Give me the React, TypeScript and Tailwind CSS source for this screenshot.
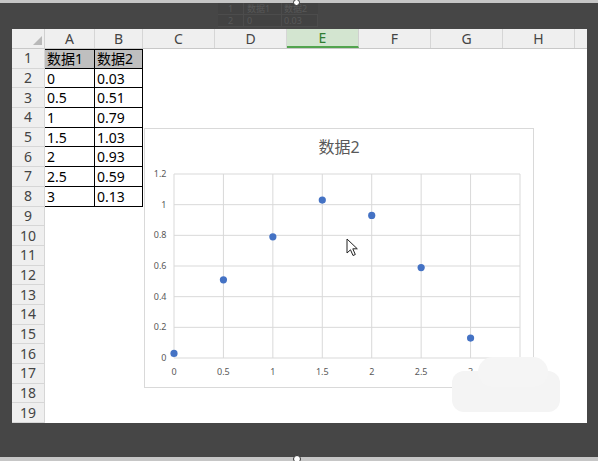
import React from "react";

const cols = [
  { l: "A", w: "w-[50px]" },
  { l: "B", w: "w-[48px]" },
  { l: "C", w: "w-[72px]" },
  { l: "D", w: "w-[72px]" },
  { l: "E", w: "w-[72px]" },
  { l: "F", w: "w-[72px]" },
  { l: "G", w: "w-[72px]" },
  { l: "H", w: "w-[72px]" },
];

const data = [
  ["数据1", "数据2"],
  ["0", "0.03"],
  ["0.5", "0.51"],
  ["1", "0.79"],
  ["1.5", "1.03"],
  ["2", "0.93"],
  ["2.5", "0.59"],
  ["3", "0.13"],
];

const pts: [number, number][] = [
  [0, 0.03],
  [0.5, 0.51],
  [1, 0.79],
  [1.5, 1.03],
  [2, 0.93],
  [2.5, 0.59],
  [3, 0.13],
];

const font = { fontFamily: '"Noto Sans", "Noto Sans CJK SC", sans-serif' };

function Chart() {
  const x0 = 30;
  const y0 = 230;
  const sx = 346 / 3.5;
  const sy = 184 / 1.2;
  const yt = [0, 0.2, 0.4, 0.6, 0.8, 1, 1.2];
  const xt = [0, 0.5, 1, 1.5, 2, 2.5, 3, 3.5];
  const lab = (v: number) => (Math.round(v * 10) / 10).toString();
  return (
    <svg width="390" height="260" className="block" style={font}>
      <rect x="0.5" y="0.5" width="389" height="259" fill="#ffffff" stroke="#d9d9d9" />
      <text x="195" y="25" textAnchor="middle" fontSize="16" fill="#595959" style={font}>
        数据2
      </text>
      {yt.map((v) => (
        <line key={"h" + v} x1={x0} x2={x0 + 346} y1={y0 - v * sy} y2={y0 - v * sy} stroke="#d9d9d9" strokeWidth="1" />
      ))}
      {xt.map((v) => (
        <line key={"v" + v} x1={x0 + v * sx} x2={x0 + v * sx} y1={y0 - 184} y2={y0} stroke="#d9d9d9" strokeWidth="1" />
      ))}
      {yt.map((v) => (
        <text key={"yl" + v} x="22.5" y={y0 - v * sy + 3} textAnchor="end" fontSize="9" fill="#595959">
          {lab(v)}
        </text>
      ))}
      {xt.slice(0, 7).map((v) => (
        <text key={"xl" + v} x={x0 + v * sx} y="247" textAnchor="middle" fontSize="9" fill="#595959">
          {lab(v)}
        </text>
      ))}
      {pts.map(([x, y]) => (
        <circle key={"p" + x} cx={x0 + x * sx} cy={y0 - y * sy} r="3.6" fill="#4472c4" />
      ))}
    </svg>
  );
}

export default function App() {
  return (
    <div className="w-[598px] h-[461px] bg-[#464646] relative overflow-hidden flex flex-col" style={font}>
      <div className="h-[3px] bg-[#c6c6c6]" />
      <div className="h-[26px] relative">
        <div className="absolute left-[218px] top-0 w-[100px] h-[24px] bg-[#424242] flex flex-col text-[9px] leading-none text-[#585858]">
          <div className="h-[12px] flex border-b border-[#4c4c4c] items-center">
            <div className="w-[25px] text-center">1</div>
            <div className="w-[38px] pl-[3px] border-l border-[#4c4c4c] h-full flex items-center">数据1</div>
            <div className="flex-1 pl-[2px] border-l border-[#4c4c4c] h-full flex items-center">数据2</div>
          </div>
          <div className="h-[12px] flex items-center border-b border-[#4c4c4c]">
            <div className="w-[25px] text-center">2</div>
            <div className="w-[38px] pl-[3px] border-l border-[#4c4c4c] h-full flex items-center">0</div>
            <div className="flex-1 pl-[2px] border-l border-r border-[#4c4c4c] h-full flex items-center">0.03</div>
          </div>
        </div>
        <div className="absolute left-[293px] top-[-4px] w-[7px] h-[7px] rounded-full bg-white border border-[#333]" />
      </div>
      <div className="ml-[12px] w-[575px] h-[394px] bg-white relative flex flex-col">
        <div className="h-[20px] flex bg-[#efefef] border-b border-[#c8c8c8] text-[14px] text-[#444]">
          <div className="w-[33px] relative border-r border-[#d0d0d0]">
            <svg width="33" height="19" className="absolute left-0 top-0">
              <polygon points="30,7 30,16 21,16" fill="#b8b8b8" />
            </svg>
          </div>
          {cols.map((c) =>
            c.l === "E" ? (
              <div
                key={c.l}
                className={`${c.w} flex items-center justify-center bg-[#d3e5d0] border-r border-[#d0d0d0] border-b-2 border-b-[#52a44e] text-[#2e7d32]`}
              >
                {c.l}
              </div>
            ) : (
              <div key={c.l} className={`${c.w} flex items-center justify-center border-r border-[#d6d6d6]`}>
                {c.l}
              </div>
            )
          )}
          <div className="flex-1" />
        </div>
        <div className="flex-1 flex flex-col">
          {Array.from({ length: 19 }).map((_, i) => {
            const d = data[i];
            return (
              <div key={i} className="flex-1 flex min-h-0">
                <div className="w-[33px] bg-[#efefef] border-r border-b border-[#d6d6d6] flex items-center justify-center text-[14px] text-[#444] leading-none">
                  {i + 1}
                </div>
                {d ? (
                  <>
                    <div
                      className={`w-[50px] border-r border-b border-black ${i === 0 ? "border-t bg-[#bfbfbf]" : ""} flex items-center pl-[2px] pt-[1px] text-[14px] text-black leading-none`}
                    >
                      {d[0]}
                    </div>
                    <div
                      className={`w-[48px] border-r border-b border-black ${i === 0 ? "border-t bg-[#bfbfbf]" : ""} flex items-center pl-[2px] pt-[1px] text-[14px] text-black leading-none`}
                    >
                      {d[1]}
                    </div>
                  </>
                ) : null}
                <div className="flex-1" />
              </div>
            );
          })}
        </div>
        <div className="absolute left-[132px] top-[99px]">
          <Chart />
        </div>
        <svg width="13" height="19" className="absolute left-[334px] top-[209px]">
          <path d="M1 1 L1 15 L4.5 11.8 L7 17.5 L9.3 16.5 L6.8 10.8 L11.3 10.8 Z" fill="#ffffff" stroke="#222" strokeWidth="1" strokeLinejoin="round" />
        </svg>
        <div className="absolute left-[440px] top-[342px] w-[108px] h-[41px] rounded-[12px] bg-[#f4f4f4]" />
        <div className="absolute left-[466px] top-[328px] w-[70px] h-[30px] rounded-full bg-[#f5f5f5]" />
      </div>
      <div className="flex-1" />
      <div className="h-[4px] bg-[#c6c6c6] relative">
        <div className="absolute left-[293px] top-[-2px] w-[8px] h-[8px] rounded-full bg-white border border-[#333]" />
      </div>
    </div>
  );
}
